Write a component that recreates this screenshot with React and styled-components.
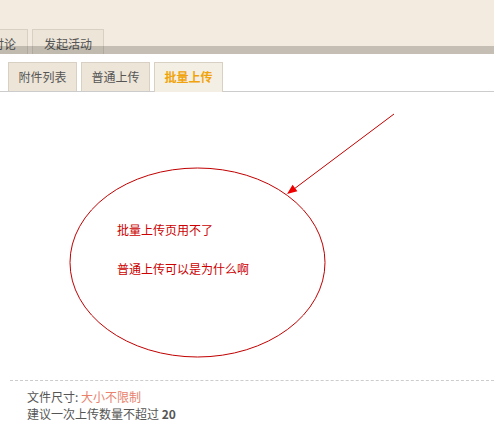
import React from 'react';
import styled, { createGlobalStyle } from 'styled-components';

const Global = createGlobalStyle`
  body {
    margin: 0;
    background: #fff;
    font-family: "Noto Sans CJK SC", "Liberation Sans", sans-serif;
    font-size: 12px;
    color: #555;
  }
`;

const Page = styled.div`
  width: 494px;
  overflow: hidden;
`;

const Header = styled.div`
  position: relative;
  height: 54px;
  background: #f3ebdf;
  display: flex;
  align-items: flex-end;
  gap: 4px;

  &::after {
    content: '';
    position: absolute;
    left: 0;
    right: 0;
    bottom: 0;
    height: 8px;
    background: rgba(0, 0, 0, 0.19);
  }
`;

const TopTab = styled.div`
  flex: none;
  height: 24px;
  line-height: 27px;
  padding: 0 11px;
  margin-left: ${p => p.$offset || 0}px;
  background: #ede5d8;
  border: 1px solid #d8d0c3;
  border-bottom: none;
  color: #555;
  white-space: nowrap;
`;

const SubTabs = styled.div`
  margin-top: 8px;
  padding-left: 8px;
  display: flex;
  gap: 4px;
  height: 29px;
  border-bottom: 1px solid #ccc;
`;

const SubTab = styled.div`
  flex: none;
  width: 67px;
  height: ${p => (p.$active ? 29 : 28)}px;
  line-height: 28px;
  text-align: center;
  background: ${p => (p.$active ? '#f4efe5' : '#ede5d8')};
  border: 1px solid #d8d0c3;
  border-bottom: none;
  color: ${p => (p.$active ? '#f0a30a' : '#555')};
  font-weight: ${p => (p.$active ? 'bold' : 'normal')};
`;

const Canvas = styled.div`
  position: relative;
  height: 288px;
  padding: 129px 0 0 117px;
  box-sizing: border-box;
`;

const Markup = styled.svg`
  position: absolute;
  left: 0;
  top: 0;
  pointer-events: none;
`;

const Notes = styled.div`
  display: flex;
  flex-direction: column;
  gap: 22px;
`;

const Note = styled.div`
  line-height: 17px;
  color: #cc0000;
`;

const Footer = styled.div`
  margin-left: 10px;
  border-top: 1px dashed #ccc;
  padding: 7px 0 0 17px;
  line-height: 17px;
`;

const Hint = styled.span`
  color: #e8826c;
`;

export default function App() {
  return (
    <Page>
      <Global />
      <Header>
        <TopTab $offset={-20}>讨论</TopTab>
        <TopTab>发起活动</TopTab>
      </Header>
      <SubTabs>
        <SubTab>附件列表</SubTab>
        <SubTab>普通上传</SubTab>
        <SubTab $active>批量上传</SubTab>
      </SubTabs>
      <Canvas>
        <Markup width="494" height="288" viewBox="0 0 494 288">
          <ellipse cx="197.5" cy="170.5" rx="127.5" ry="94.5" fill="none" stroke="#c00000" strokeWidth="1" />
          <line x1="394" y1="22" x2="294" y2="97" stroke="#c00000" strokeWidth="1" />
          <polygon points="287,102 292.6,92.8 297.4,99.2" fill="#ee0000" />
        </Markup>
        <Notes>
          <Note>批量上传页用不了</Note>
          <Note>普通上传可以是为什么啊</Note>
        </Notes>
      </Canvas>
      <Footer>
        <div>文件尺寸: <Hint>大小不限制</Hint></div>
        <div>建议一次上传数量不超过 <b>20</b></div>
      </Footer>
    </Page>
  );
}
